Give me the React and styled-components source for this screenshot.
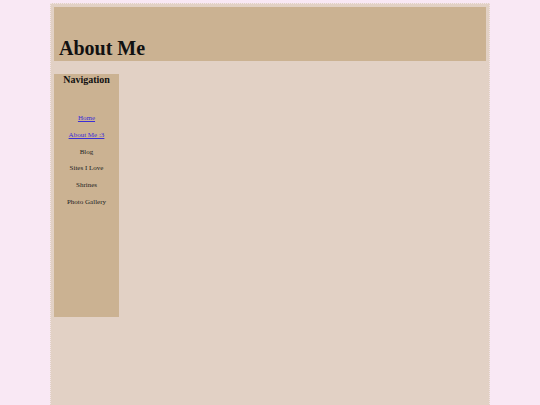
import React from 'react';
import styled, { createGlobalStyle } from 'styled-components';

const GlobalStyle = createGlobalStyle`
  html, body {
    margin: 0;
    padding: 0;
    background: #f9e8f4;
    font-family: "Liberation Serif", "Times New Roman", serif;
  }
`;

const Page = styled.div`
  width: 432px;
  min-height: 395px;
  margin: 3px 0 0 50px;
  padding: 3px;
  background: #e2d1c5;
  border: 1px dotted #f3e4e8;
`;

const Header = styled.header`
  height: 54px;
  background: #cbb292;
  display: flex;
  align-items: flex-end;
  padding: 0 5px;
`;

const Title = styled.h1`
  margin: 0 0 1px 0;
  font-size: 20px;
  font-weight: bold;
  color: #111;
`;

const Body = styled.div`
  display: flex;
  margin-top: 13px;
`;

const Sidebar = styled.nav`
  width: 65px;
  height: 243px;
  background: #cbb292;
  display: flex;
  flex-direction: column;
  align-items: center;
`;

const NavTitle = styled.h3`
  margin: 0;
  font-size: 10px;
  font-weight: bold;
  color: #111;
  line-height: 12px;
`;

const NavList = styled.ul`
  list-style: none;
  margin: 27px 0 0 0;
  padding: 0;
  display: flex;
  flex-direction: column;
  align-items: center;
  gap: 6.8px;
`;

const NavItem = styled.li`
  font-size: 7px;
  line-height: 10px;
  color: #222;
  text-align: center;
  white-space: nowrap;
`;

const NavLink = styled.a`
  color: #3b2fd6;
  text-decoration: underline;
`;

const items = [
  { label: 'Home', link: true },
  { label: 'About Me :3', link: true },
  { label: 'Blog' },
  { label: 'Sites I Love' },
  { label: 'Shrines' },
  { label: 'Photo Gallery' },
];

export default function App() {
  return (
    <>
      <GlobalStyle />
      <Page>
        <Header>
          <Title>About Me</Title>
        </Header>
        <Body>
          <Sidebar>
            <NavTitle>Navigation</NavTitle>
            <NavList>
              {items.map((item) => (
                <NavItem key={item.label}>
                  {item.link ? <NavLink href="#">{item.label}</NavLink> : item.label}
                </NavItem>
              ))}
            </NavList>
          </Sidebar>
        </Body>
      </Page>
    </>
  );
}
